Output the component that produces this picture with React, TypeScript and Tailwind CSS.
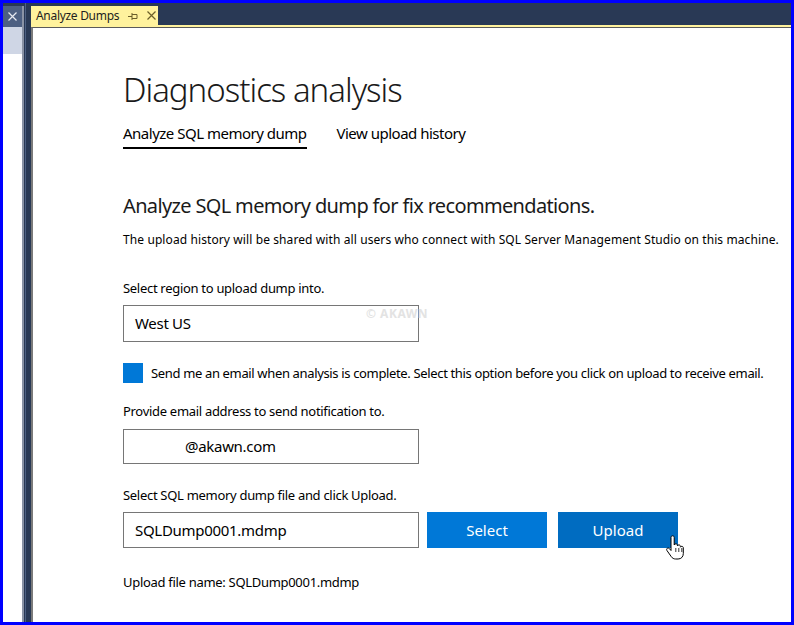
import React from 'react';

const font = { fontFamily: '"Noto Sans", "Open Sans", sans-serif' };

function PinIcon() {
  return (
    <svg width="11" height="9" viewBox="0 0 11 9" className="text-[#6b5f2a]">
      <path d="M0 4.5h4M4 1v7M4 2.5h5v4H4" fill="none" stroke="currentColor" strokeWidth="1" />
    </svg>
  );
}

function CloseIcon({ className }: { className?: string }) {
  return (
    <svg width="9" height="9" viewBox="0 0 9 9" className={className}>
      <path d="M0.5 0.5l8 8M8.5 0.5l-8 8" stroke="currentColor" strokeWidth="1.2" />
    </svg>
  );
}

function HandCursor() {
  return (
    <svg width="22" height="26" viewBox="0 0 22 26" className="absolute left-[662px] top-[532px]">
      <path
        d="M6 2.5c0-1 .7-1.7 1.6-1.7s1.6.7 1.6 1.7V10c.3-.8 1-1.2 1.7-1.2.9 0 1.5.6 1.5 1.5v.6c.3-.7.9-1 1.5-1 .9 0 1.5.6 1.5 1.5v.8c.3-.6.9-.9 1.4-.9.9 0 1.5.7 1.5 1.6v5.6c0 3.2-2 5.5-5.2 5.5h-2.4c-2 0-3.3-.8-4.4-2.3L2 15.6c-.6-.8-.4-1.8.3-2.3.7-.5 1.6-.3 2.2.4L6 15.5z"
        fill="#fff"
        stroke="#000"
        strokeWidth="1"
      />
      <path d="M10.8 13v4M13.8 13v4M16.8 13v4" stroke="#000" strokeWidth="0.8" />
    </svg>
  );
}

export default function App() {
  return (
    <div className="relative flex h-[625px] w-[794px] border-[3px] border-[#0000ff] bg-white" style={font}>
      {/* collapsed side panel */}
      <div className="flex w-[21px] flex-col bg-white">
        <div className="h-[3px] bg-[#293955]" />
        <div className="flex h-[21px] items-center justify-center border-r-2 border-[#8a93a5] bg-[#4d6082] text-[#e6e9f0]">
          <CloseIcon />
        </div>
        <div className="h-[27px] border-r-2 border-[#8a93a5] bg-[#cfd6e5]" />
        <div className="flex-1 border-r-2 border-[#8a93a5] bg-white" />
      </div>

      {/* splitter */}
      <div className="flex w-[7px] bg-[#293955]">
        <div className="ml-[1px] w-[1px] bg-[#4d6082]" />
      </div>

      {/* document well */}
      <div className="flex flex-1 flex-col">
        <div className="flex h-[22px] items-end bg-[#293955]">
          <div className="flex h-[19px] w-[127px] items-center bg-[#fff29d] pl-[5px] text-[12px] text-[#1e1e1e]">
            <span className="tracking-[-0.3px]">Analyze Dumps</span>
            <span className="ml-[9px] mt-[1px]">
              <PinIcon />
            </span>
            <span className="ml-[8px] text-[#6b5f2a]">
              <CloseIcon />
            </span>
          </div>
        </div>
        <div className="h-[2px] bg-[#fff29d]" />
        <div className="flex flex-1 border-l-2 border-t border-[#7a7a7a] border-t-[#5a5a5a]">
          <div className="flex flex-1 flex-col pl-[90px] pt-[42px] text-[#000]">
            <h1 className="text-[33px] font-light leading-[40px] tracking-[-1px] text-[#1a1a1a]">
              Diagnostics analysis
            </h1>

            <div className="mt-[13px] flex gap-[30px] text-[15px] leading-[20px]">
              <div className="border-b-2 border-black pb-[4px] tracking-[-0.5px]">Analyze SQL memory dump</div>
              <div className="tracking-[-0.5px]">View upload history</div>
            </div>

            <h2 className="mt-[44px] text-[20px] leading-[26px] tracking-[-0.65px] text-[#1a1a1a]">
              Analyze SQL memory dump for fix recommendations.
            </h2>
            <p className="mt-[13px] text-[12px] leading-[16px] tracking-[0.1px]">
              The upload history will be shared with all users who connect with SQL Server Management Studio on this machine.
            </p>

            <p className="mt-[31px] text-[13px] leading-[18px] tracking-[-0.3px]">Select region to upload dump into.</p>
            <div className="relative mt-[8px] flex h-[37px] w-[296px] items-center border border-[#767676] pl-[11px] text-[15px] tracking-[-0.3px]">
              West US
              <span className="absolute left-[242px] top-[-1px] whitespace-nowrap text-[12px] font-bold tracking-[0.5px] text-[#e3e3e3]">
                © AKAWN
              </span>
            </div>

            <div className="mt-[21px] flex items-center gap-[8px]">
              <div className="h-[20px] w-[20px] bg-[#0078d7]" />
              <span className="text-[13px] leading-[18px] tracking-[-0.35px]">
                Send me an email when analysis is complete. Select this option before you click on upload to receive email.
              </span>
            </div>

            <p className="mt-[19px] text-[13px] leading-[18px] tracking-[-0.3px]">Provide email address to send notification to.</p>
            <div className="mt-[9px] flex h-[35px] w-[296px] items-center border border-[#767676] pl-[61px] text-[15px] tracking-[-0.3px]">
              @akawn.com
            </div>

            <p className="mt-[22px] text-[13px] leading-[18px] tracking-[-0.3px]">Select SQL memory dump file and click Upload.</p>
            <div className="mt-[8px] flex gap-[8px]">
              <div className="flex h-[36px] w-[296px] items-center border border-[#767676] pl-[11px] text-[15px] tracking-[-0.3px]">
                SQLDump0001.mdmp
              </div>
              <div className="flex h-[36px] w-[120px] items-center justify-center bg-[#0078d7] text-[15px] text-white">
                Select
              </div>
              <div className="ml-[3px] flex h-[36px] w-[120px] items-center justify-center bg-[#006cc1] text-[15px] text-white">
                Upload
              </div>
            </div>

            <p className="mt-[25px] text-[13px] leading-[18px] tracking-[-0.3px]">Upload file name: SQLDump0001.mdmp</p>
          </div>
        </div>
      </div>
      <HandCursor />
    </div>
  );
}
